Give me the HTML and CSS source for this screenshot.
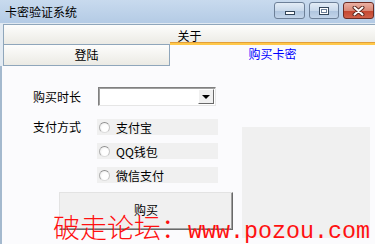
FILE: index.html
```html
<!DOCTYPE html>
<html lang="zh-CN">
<head>
  <meta charset="UTF-8" />
  <title>卡密验证系统</title>
  <link rel="stylesheet" href="styles.css">
</head>
<body>
  <div class="titlebar">
    <span class="title">卡密验证系统</span>
    <div class="caption">
      <div class="cbtn min"><span class="min-ico"></span></div>
      <div class="cbtn max"><span class="max-ico"></span></div>
      <div class="cbtn close">
        <svg width="13" height="10" viewBox="0 0 13 10">
          <path d="M2.5 1.5 L10.5 8.5 M10.5 1.5 L2.5 8.5" stroke="#5a2a22" stroke-width="4" stroke-linecap="round"/>
          <path d="M2.5 1.5 L10.5 8.5 M10.5 1.5 L2.5 8.5" stroke="#fff" stroke-width="2" stroke-linecap="round"/>
        </svg>
      </div>
    </div>
  </div>

  <div class="tabstrip">
    <div class="tab-row row-top">
      <div class="tab tab-about">关于</div>
    </div>
    <div class="tab-row row-bottom">
      <div class="tab tab-login">登陆</div>
      <div class="tab tab-active">购买卡密</div>
    </div>
  </div>

  <div class="page">
    <div class="form">
      <div class="row row-time">
        <span class="label">购买时长</span>
        <div class="combo">
          <div class="combo-btn"><span class="arrow"></span></div>
        </div>
      </div>
      <div class="row row-pay">
        <span class="label">支付方式</span>
        <div class="options">
          <div class="opt"><span class="radio"></span>支付宝</div>
          <div class="opt"><span class="radio"></span>QQ钱包</div>
          <div class="opt"><span class="radio"></span>微信支付</div>
        </div>
      </div>
      <div class="buy-btn">购买</div>
    </div>
    <div class="panel"></div>
  </div>

  <div class="watermark">破走论坛：<span class="url">www.pozou.com</span></div>
</body>
</html>
```

FILE: styles.css
```css
html, body {
  margin: 0;
  width: 375px;
  height: 244px;
  overflow: hidden;
}
body {
  position: relative;
  background: #fbfbfd;
  font-family: "Noto Sans CJK SC", sans-serif;
  font-size: 12px;
  color: #000;
}

/* title bar */
.titlebar {
  height: 23px;
  display: flex;
  justify-content: space-between;
  background: linear-gradient(#c8daee, #b4cbe5);
}
.title {
  padding-left: 5px;
  line-height: 23px;
}
.caption {
  display: flex;
  gap: 4px;
  padding: 2px 1px 0 0;
}
.cbtn {
  width: 31px;
  height: 17px;
  box-sizing: border-box;
  border: 1px solid #6d8098;
  border-radius: 3px;
  background: linear-gradient(#e3ecf6, #c9d9eb 50%, #aec4de 51%, #c3d5ea);
  display: flex;
  align-items: center;
  justify-content: center;
}
.cbtn.max {
  width: 30px;
}
.cbtn.close {
  border-color: #6b2b22;
  background: linear-gradient(#eab0a3, #d98876 50%, #c4452e 51%, #d0614a);
}
.min-ico {
  width: 10px;
  height: 4px;
  margin-top: 5px;
  box-sizing: border-box;
  border: 1px solid #34465a;
  background: #fff;
}
.max-ico {
  width: 10px;
  height: 8px;
  box-sizing: border-box;
  border: 1px solid #34465a;
  background: #fff;
  box-shadow: inset 0 0 0 1px #fff, inset 0 0 0 2px #6d8098;
}

/* tabs */
.tabstrip {
  padding: 1px 0 0 3px;
  background: #e2eaf2;
}
.tab {
  box-sizing: border-box;
  text-align: center;
  background: linear-gradient(#fdfdfc, #ebeae4);
  border: 1px solid #8fa6bb;
}
.row-top .tab {
  height: 20px;
  padding-top: 4px;
  line-height: 14px;
  border-right: none;
  border-bottom: none;
  overflow: hidden;
}
.row-bottom {
  display: flex;
  height: 22px;
}
.tab-login {
  width: 167px;
  line-height: 20px;
}
.tab-active {
  position: relative;
  flex: 1;
  height: 24px;
  margin-top: -2px;
  border: none;
  background: linear-gradient(#e39f38 0 1px, #ffc84a 1px 3px, #fbfbfd 3px);
  padding-top: 3px;
  line-height: 17px;
  color: #0000ff;
}

/* page */
.page {
  display: flex;
  height: 178px;
  box-sizing: border-box;
  padding: 21px 0 0 31px;
  border-left: 2px solid #a4b9ce;
}
.form {
  width: 209px;
}
.row {
  display: flex;
}
.row-time {
  align-items: center;
  margin-bottom: 13px;
}
.label {
  width: 64px;
  line-height: 16px;
}
.combo {
  margin-left: 1px;
  width: 118px;
  height: 19px;
  box-sizing: border-box;
  border: 1px solid;
  border-color: #808080 #e6e6e6 #e6e6e6 #808080;
  box-shadow: inset 1px 1px 0 #a0a0a0;
  background: #fff;
  display: flex;
  justify-content: flex-end;
  padding: 1px;
}
.combo-btn {
  width: 16px;
  box-sizing: border-box;
  border: 1px solid;
  border-color: #fff #696969 #696969 #fff;
  background: #f0f0f0;
  display: flex;
  align-items: center;
  justify-content: center;
}
.arrow {
  border-left: 4px solid transparent;
  border-right: 4px solid transparent;
  border-top: 4px solid #000;
}
.options {
  display: flex;
  flex-direction: column;
  gap: 8px;
}
.opt {
  width: 121px;
  height: 16px;
  box-sizing: border-box;
  padding-left: 2px;
  background: #f0f0f0;
  display: flex;
  align-items: center;
}
.radio {
  width: 11px;
  height: 11px;
  box-sizing: border-box;
  border-radius: 50%;
  border: 1px solid;
  border-color: #8e8e8e #c4c4c4 #dedede #b0b0b0;
  background: radial-gradient(circle at 60% 60%, #fff 40%, #e6e6e6);
  margin-right: 6px;
}
.buy-btn {
  margin: 9px 0 0 26px;
  width: 174px;
  height: 38px;
  box-sizing: border-box;
  border: 1px solid;
  border-color: #e3e3e3 #696969 #696969 #e3e3e3;
  box-shadow: inset -1px -1px 0 #a0a0a0;
  background: #f0f0f0;
  text-align: center;
  line-height: 34px;
}
.panel {
  margin-top: 40px;
  width: 128px;
  height: 111px;
  background: #f0f0f0;
}

/* watermark drawn over the form */
.watermark {
  position: absolute;
  left: 53px;
  top: 213px;
  font-size: 27px;
  font-weight: 300;
  line-height: 27px;
  color: #ff1010;
  white-space: nowrap;
}
.url {
  font-family: "Liberation Mono", monospace;
  font-size: 23.33px;
  font-weight: normal;
}
```
